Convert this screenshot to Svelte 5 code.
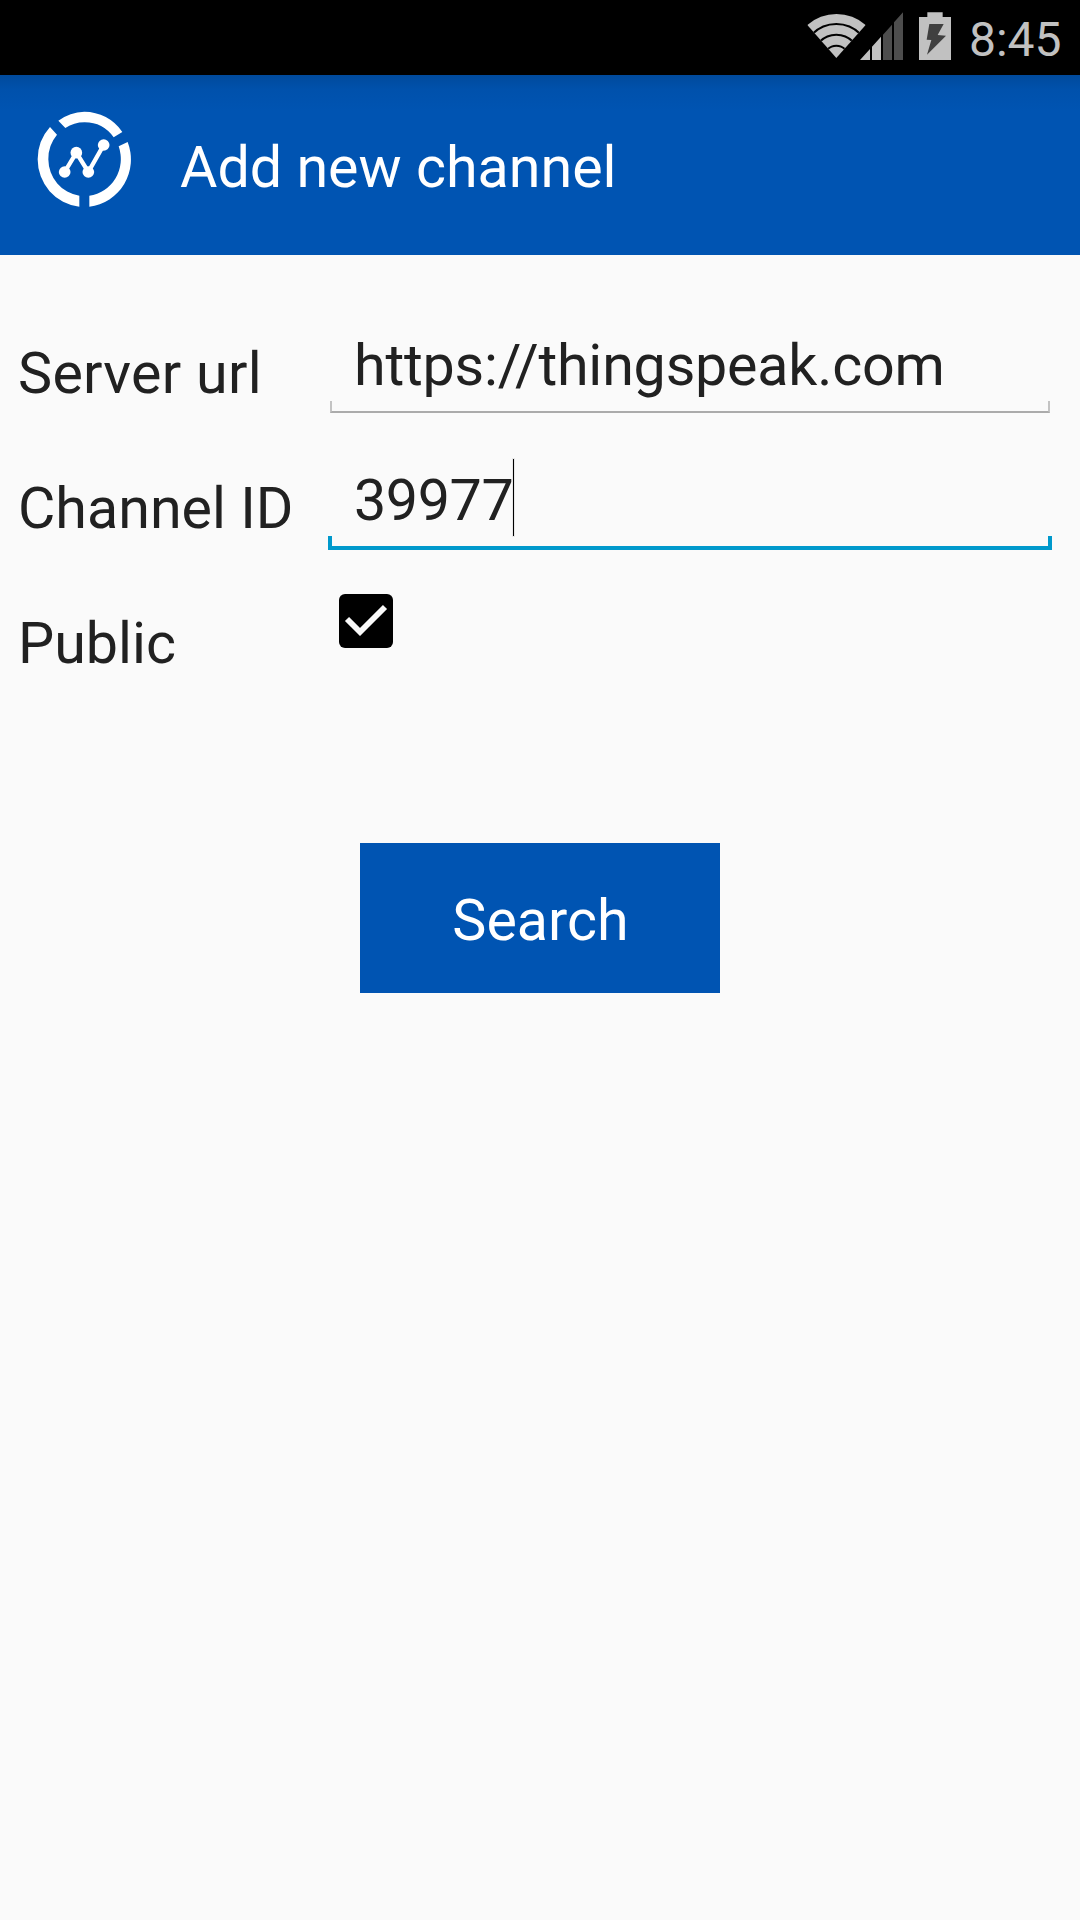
<script>
  let serverUrl = 'https://thingspeak.com';
  let channelId = '39977';
</script>

<div class="screen">
  <div class="status">
    <svg class="signals" viewBox="51 0 435 225" aria-hidden="true">
      <defs>
        <clipPath id="wedge"><path d="M139 174L52 75A132 132 0 0 1 227 75Z" /></clipPath>
      </defs>
      <g clip-path="url(#wedge)">
        <rect x="51" y="40" width="180" height="136" fill="#c1c1c1" />
        <g fill="none" stroke="#000" stroke-width="6">
          <circle cx="139" cy="174" r="102" />
          <circle cx="139" cy="174" r="70" />
          <circle cx="139" cy="174" r="37" />
        </g>
      </g>
      <path fill="#c1c1c1" d="M210 180L240 147V180ZM246 180V140L273 110V180Z" />
      <path fill="#4d4d4d" d="M279 180V104L306 74V180ZM312 180V67L339 37V180Z" />
      <path fill="#c1c1c1" d="M387 51H412V37H458V51H483V180H387Z" />
      <path fill="#404040" d="M418 72H461L443 105L468 107L411 164L424 120L410 119Z" />
    </svg>
    <span class="time">8:45</span>
  </div>

  <header>
    <svg class="logo" viewBox="0 0 390 390" aria-hidden="true">
      <g fill="#fff">
        <path d="M115 92A140 142.5 0 0 1 193 65A140 142.5 0 0 1 307 126L281 142A108 111 0 0 0 193 97A108 111 0 0 0 136 114Z" />
        <path d="M323 156A140 142.5 0 0 1 208 350V317A108 111 0 0 0 296 169Z" />
        <path d="M178 350A140 142.5 0 0 1 53 208A140 142.5 0 0 1 90 111L111 134A108 111 0 0 0 85 208A108 111 0 0 0 178 317Z" />
        <circle cx="134" cy="246" r="17.5" />
        <circle cx="169" cy="188" r="17.5" />
        <circle cx="205" cy="246" r="17.5" />
        <circle cx="251" cy="165" r="17.5" />
      </g>
      <path d="M134 246L169 188L205 246L251 165" fill="none" stroke="#fff" stroke-width="13" />
    </svg>
    <h1>Add new channel</h1>
  </header>

  <main>
    <div class="row">
      <span class="label server">Server url</span>
      <div class="field">
        <div class="value url">{serverUrl}</div>
        <div class="line"></div>
      </div>
    </div>
    <div class="row">
      <span class="label">Channel ID</span>
      <div class="field">
        <div class="value digits">{channelId}<i class="caret"></i></div>
        <div class="line focus"></div>
      </div>
    </div>
    <div class="row">
      <span class="label">Public</span>
      <svg class="check" viewBox="0 0 54 54" role="img" aria-label="Checked">
        <rect width="54" height="54" rx="6" />
        <path d="M8 25L21 38L46 13" fill="none" stroke="#fafafa" stroke-width="5.8" />
      </svg>
    </div>
    <button>Search</button>
  </main>
</div>

<style>
  :global(body) {
    background: #fafafa;
  }
  .screen {
    width: 1080px;
    height: 1920px;
    overflow: hidden;
    background: #fafafa;
    color: #212121;
    font-family: Roboto, sans-serif;
    font-size: 57.4px;
  }
  .status {
    display: flex;
    justify-content: flex-end;
    height: 75px;
    padding-right: 18px;
    background: #000;
  }
  .signals {
    width: 145px;
    height: 75px;
    margin-right: 17px;
  }
  .time {
    width: 93px;
    color: #c1c1c1;
    font-size: 48px;
    line-height: 79px;
  }
  header {
    display: flex;
    height: 180px;
    background: linear-gradient(#004a9c, #0051ac 15px, #0054b2 36px, #0054b2);
    color: #fff;
  }
  .logo {
    width: 130px;
    height: 130px;
    margin: 15px 30px 0 20px;
  }
  h1 {
    margin: 0;
    font-size: inherit;
    font-weight: 400;
    line-height: 185px;
  }
  main {
    display: flex;
    flex-direction: column;
    padding: 51px 28px 0 18px;
  }
  .row {
    display: flex;
    height: 135px;
  }
  .label {
    width: 310px;
    line-height: 135px;
    white-space: nowrap;
  }
  .server {
    letter-spacing: 0.3px;
  }
  .field {
    flex: 1;
    padding-top: 18px;
  }
  .value {
    display: flex;
    box-sizing: border-box;
    height: 77px;
    padding-left: 26px;
    line-height: 83px;
    white-space: nowrap;
  }
  .url {
    letter-spacing: -0.2px;
  }
  .digits {
    letter-spacing: -0.38px;
  }
  .caret {
    width: 1px;
    height: 77px;
    background: #000;
    box-shadow: 0 0 0 1px rgba(0, 0, 0, 0.07);
  }
  .line {
    box-sizing: border-box;
    height: 12px;
    margin: 0 2px;
    border: solid #c3c3c3;
    border-width: 0 2px 2px;
    border-bottom-color: #ababab;
  }
  .line.focus {
    height: 14px;
    margin: 0;
    border: 4px solid #0099cc;
    border-top: 0;
  }
  .check {
    width: 54px;
    height: 54px;
    margin: 18px 0 0 11px;
  }
  button {
    align-self: center;
    width: 360px;
    height: 150px;
    margin: 132px 0 0 10px;
    padding: 5px 0 0 1px;
    border: 0;
    background: #0054b2;
    color: #fff;
    font: inherit;
  }
</style>
